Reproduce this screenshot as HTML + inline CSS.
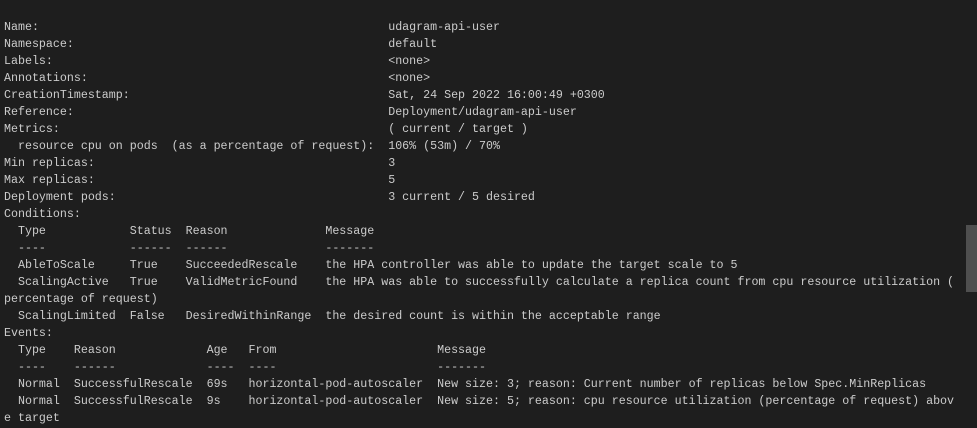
<!DOCTYPE html>
<html><head><style>
html,body{margin:0;padding:0;background:#1e1e1e;width:977px;height:428px;overflow:hidden}
pre{position:absolute;left:4px;top:19px;margin:0;font-family:"Liberation Mono",monospace;font-size:11.65px;line-height:17px;color:#cccccc;white-space:pre}
.sb{position:absolute;left:966px;top:225px;width:11px;height:67px;background:#4f4f4f}
</style></head><body>
<pre>Name:                                                  udagram-api-user
Namespace:                                             default
Labels:                                                &lt;none&gt;
Annotations:                                           &lt;none&gt;
CreationTimestamp:                                     Sat, 24 Sep 2022 16:00:49 +0300
Reference:                                             Deployment/udagram-api-user
Metrics:                                               ( current / target )
  resource cpu on pods  (as a percentage of request):  106% (53m) / 70%
Min replicas:                                          3
Max replicas:                                          5
Deployment pods:                                       3 current / 5 desired
Conditions:
  Type            Status  Reason              Message
  ----            ------  ------              -------
  AbleToScale     True    SucceededRescale    the HPA controller was able to update the target scale to 5
  ScalingActive   True    ValidMetricFound    the HPA was able to successfully calculate a replica count from cpu resource utilization (
percentage of request)
  ScalingLimited  False   DesiredWithinRange  the desired count is within the acceptable range
Events:
  Type    Reason             Age   From                       Message
  ----    ------             ----  ----                       -------
  Normal  SuccessfulRescale  69s   horizontal-pod-autoscaler  New size: 3; reason: Current number of replicas below Spec.MinReplicas
  Normal  SuccessfulRescale  9s    horizontal-pod-autoscaler  New size: 5; reason: cpu resource utilization (percentage of request) abov
e target</pre>
<div class="sb"></div>
</body></html>
